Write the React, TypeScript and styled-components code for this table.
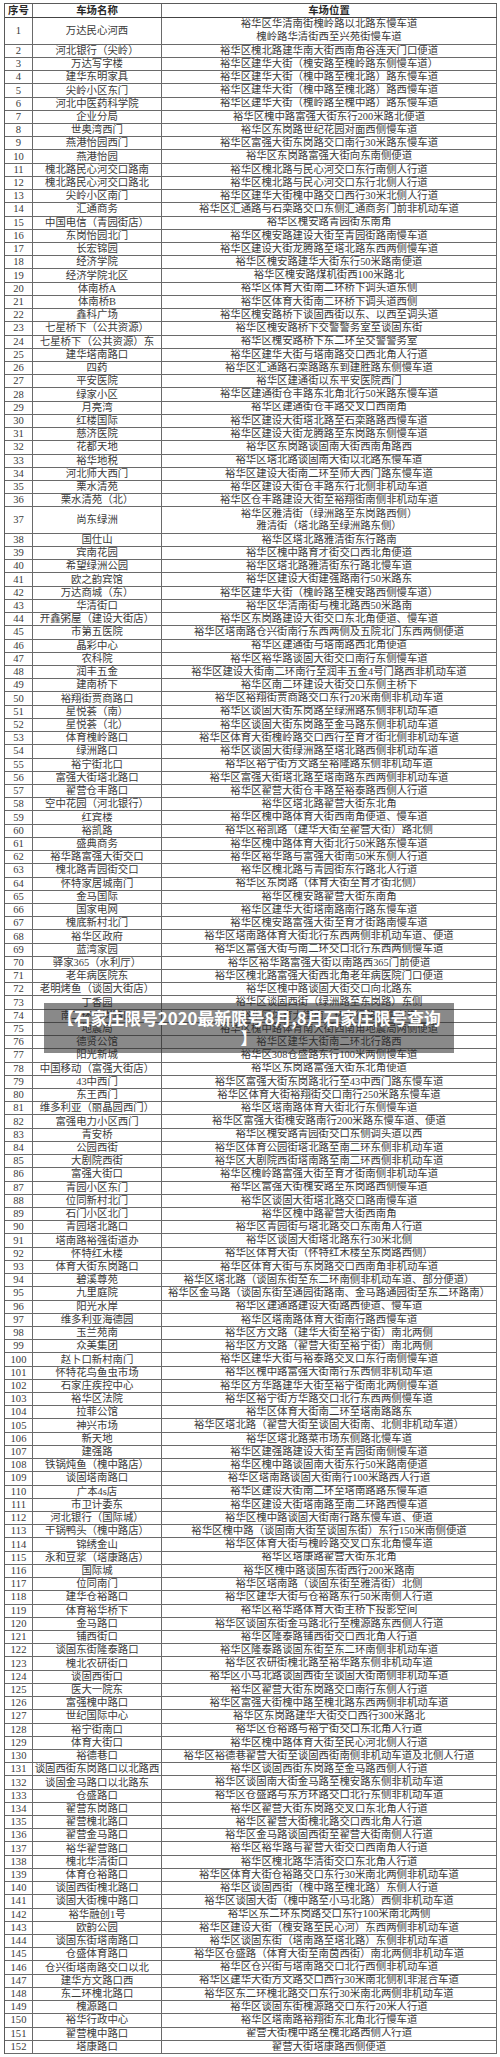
import React from "react";
import styled, { createGlobalStyle } from "styled-components";

const GlobalStyle = createGlobalStyle`
  html, body { margin: 0; padding: 0; background: #ffffff; }
  * { box-sizing: border-box; }
`;

type Row = [number, string, string[]];

const ROWS: Row[] = [
  [1, "万达民心河西", ["裕华区华清南街槐岭路以北路东慢车道", "槐岭路华清街西至兴苑街慢车道"]],
  [2, "河北银行（尖岭）", ["裕华区槐北路建华南大街西南角谷连天门口便道"]],
  [3, "万达写字楼", ["裕华区建华大街（槐安路至槐岭路东侧慢车道）"]],
  [4, "建华东明家具", ["裕华区建华大街（槐中路至槐北路）路东慢车道"]],
  [5, "尖岭小区东门", ["裕华区建华大街（槐中路至槐北路）路西慢车道"]],
  [6, "河北中医药科学院", ["裕华区建华大街（槐岭路至槐中路）路东慢车道"]],
  [7, "企业分局", ["裕华区槐中路富强大街东行200米路北便道"]],
  [8, "世奥湾西门", ["裕华区东岗路世纪花园对面西侧慢车道"]],
  [9, "燕港怡园西门", ["裕华区富强大街东岗路交口南行30米路东慢车道"]],
  [10, "燕港怡园", ["裕华区东岗路富强大街向东南侧便道"]],
  [11, "槐北路民心河交口路南", ["裕华区槐北路与民心河交口东行南侧人行道"]],
  [12, "槐北路民心河交口路北", ["裕华区槐北路与民心河交口东行北侧人行道"]],
  [13, "尖岭小区南门", ["裕华区建华大街槐中路交口西行30米北侧人行道"]],
  [14, "汇通商务", ["裕华区汇通路与石栾路交口东侧汇通商务门前非机动车道"]],
  [15, "中国电信（青园街店）", ["裕华区槐安路青园街东南角"]],
  [16, "东岗怡园北门", ["裕华区槐安路建设大街至青园街路南慢车道"]],
  [17, "长宏锦园", ["裕华区建设大街龙腾路至塔北路东西两侧慢车道"]],
  [18, "经济学院", ["裕华区槐安路建华大街东行50米路南便道"]],
  [19, "经济学院北区", ["裕华区槐安路煤机街西100米路北"]],
  [20, "体南桥A", ["裕华区体育大街南二环桥下调头道东侧"]],
  [21, "体南桥B", ["裕华区体育大街南二环桥下调头道西侧"]],
  [22, "鑫科广场", ["裕华区槐安路桥下谈固西街以东、以西至调头道"]],
  [23, "七星桥下（公共资源）", ["裕华区槐安路桥下交警警务室至谈固东街"]],
  [24, "七星桥下（公共资源）东", ["裕华区槐安路桥下东二环至交警警务室"]],
  [25, "建华塔南路口", ["裕华区建华大街与塔南路交口西北角人行道"]],
  [26, "四药", ["裕华区汇通路石栾路路东到建胜路东侧慢车道"]],
  [27, "平安医院", ["裕华区建通街以东平安医院西门"]],
  [28, "绿家小区", ["裕华区建通街仓丰路东北角北行50米路东慢车道"]],
  [29, "月亮湾", ["裕华区建通街仓丰路交叉口西南角"]],
  [30, "红楼国际", ["裕华区建设大街塔北路至石栾路路西慢车道"]],
  [31, "慈济医院", ["裕华区建设大街龙腾路至东岗路东侧慢车道"]],
  [32, "花都天地", ["裕华区东岗路谈固南大街西南角路西"]],
  [33, "裕华地税", ["裕华区塔北路谈固南大街以北路东慢车道"]],
  [34, "河北师大西门", ["裕华区建设大街南二环至师大西门路东慢车道"]],
  [35, "栗水清苑", ["裕华区建设大街仓丰路东行北侧非机动车道"]],
  [36, "栗水清苑（北）", ["裕华区仓丰路建设大街至裕翔街南侧非机动车道"]],
  [37, "尚东绿洲", ["裕华区雅清街（绿洲路至东岗路西侧）", "雅清街（塔北路至绿洲路东侧）"]],
  [38, "国仕山", ["裕华区塔北路雅清街东行路南"]],
  [39, "宾南花园", ["裕华区槐中路育才街交口西北角便道"]],
  [40, "希望绿洲公园", ["裕华区塔北路雅清街东行路北慢车道"]],
  [41, "欧之韵宾馆", ["裕华区建设大街建强路南行50米路东"]],
  [42, "万达商城（东）", ["裕华区建华大街（槐岭路至槐安路西侧慢车道）"]],
  [43, "华清街口", ["裕华区华清南街与槐北路西50米路南"]],
  [44, "开鑫粥屋（建设大街店）", ["裕华区东岗路建设大街交口东北角便道、慢车道"]],
  [45, "市第五医院", ["裕华区塔南路仓兴街南行东西两侧及五院北门东西两侧便道"]],
  [46, "晶彩中心", ["裕华区建通街与塔南路西北角便道"]],
  [47, "农科院", ["裕华区裕华路谈固大街交口南行东侧慢车道"]],
  [48, "润丰五金", ["裕华区建设大街南二环南行至润丰五金4号门路西非机动车道"]],
  [49, "建南桥下", ["裕华区南二环建设大街交口东侧主桥下"]],
  [50, "裕翔街贾商路口", ["裕华区裕翔街贾商路交口东行20米南侧非机动车道"]],
  [51, "星悦荟（南）", ["裕华区谈固大街东岗路至绿洲路东侧非机动车道"]],
  [52, "星悦荟（北）", ["裕华区谈固大街东岗路至金马路东侧非机动车道"]],
  [53, "体育槐岭路口", ["裕华区体育大街槐岭路交口西行至育才街北侧非机动车道"]],
  [54, "绿洲路口", ["裕华区谈固大街绿洲路至塔北路西侧非机动车道"]],
  [55, "裕宁街北口", ["裕华区裕宁街方文路至裕隆路东侧非机动车道"]],
  [56, "富强大街塔北路口", ["裕华区富强大街塔北路至塔南路东西两侧非机动车道"]],
  [57, "翟营仓丰路口", ["裕华区翟营大街仓丰路至裕泰路西侧人行道"]],
  [58, "空中花园（河北银行）", ["裕华区塔北路翟营大街东北角"]],
  [59, "红宾楼", ["裕华区槐中路体育大街西南角便道、慢车道"]],
  [60, "裕凯路", ["裕华区裕凯路（建华大街至翟营大街）路北侧"]],
  [61, "盛典商务", ["裕华区槐中路体育大街北行50米路东慢车道"]],
  [62, "裕华路富强大街交口", ["裕华区裕华路与富强大街南50米东侧人行道"]],
  [63, "槐北路青园街交口", ["裕华区槐北路与青园街东行路北人行道"]],
  [64, "怀特家居城南门", ["裕华区东岗路（体育大街至育才街北侧）"]],
  [65, "金马国际", ["裕华区槐安路翟营大街东南角"]],
  [66, "国家电网", ["裕华区建华大街塔南路南行路东慢车道"]],
  [67, "槐底新村北门", ["裕华区槐安路富强大街至育才街路南慢车道"]],
  [68, "裕华区政府", ["裕华区塔南路体育大街北行东西两侧非机动车道、便道"]],
  [69, "蓝湾家园", ["裕华区富强大街与南二环交口北行东西两侧慢车道"]],
  [70, "驿家365（水利厅）", ["裕华区裕华路富强大街以南路西365门前便道"]],
  [71, "老年病医院东", ["裕华区槐北路富强大街西北角老年病医院门口便道"]],
  [72, "老明烤鱼（谈固大街店）", ["裕华区槐中路谈固大街交口向北路东"]],
  [73, "丁香园", ["裕华区谈固西街（绿洲路至东岗路）东侧"]],
  [74, "南二环东岗路口", ["裕华区体育大街南二环北行路东慢车道"]],
  [75, "地震局", ["裕华区槐中路体育南大街西南角地震局两侧便道"]],
  [76, "德贤公馆", ["裕华区建华大街南二环北行路西"]],
  [77, "阳光新城", ["裕华区308仓盛路东行100米两侧慢车道"]],
  [78, "中国移动（富强大街店）", ["裕华区东岗路富强大街东北角便道"]],
  [79, "43中西门", ["裕华区富强大街东岗路北行至43中西门路东慢车道"]],
  [80, "东王西门", ["裕华区体育大街裕翔街交口南行250米路东慢车道"]],
  [81, "维多利亚（丽晶园西门）", ["裕华区塔南路体育大街北行东侧慢车道"]],
  [82, "富强电力小区西门", ["裕华区富强大街槐安路南行200米路东慢车道、便道"]],
  [83, "青安桥", ["裕华区槐安路青园街交口东侧调头道以西"]],
  [84, "公园西街", ["裕华区体育公园街塔北路至南二环东侧非机动车道"]],
  [85, "大剧院西街", ["裕华区大剧院西街塔南路至南二环西侧非机动车道"]],
  [86, "富强大街口", ["裕华区槐岭路富强大街至育才街南侧非机动车道"]],
  [87, "青园小区东门", ["裕华区富强大街槐安路至东岗路西侧慢车道"]],
  [88, "位同新村北门", ["裕华区谈固大街塔北路交口路南慢车道"]],
  [89, "石门小区北门", ["裕华区槐中路翟营大街西南角"]],
  [90, "青园塔北路口", ["裕华区青园街与塔北路交口东南角人行道"]],
  [91, "塔南路裕强街道办", ["裕华区谈固大街塔北路东行30米北侧"]],
  [92, "怀特红木楼", ["裕华区体育大街（怀特红木楼至东岗路西侧）"]],
  [93, "体育大街东岗路口", ["裕华区体育大街与东岗路交口西南角非机动车道"]],
  [94, "碧溪尊苑", ["裕华区塔北路（谈固东街至东二环南侧非机动车道、部分便道）"]],
  [95, "九里庭院", ["裕华区金马路（谈固东街至通园街路南、金马路通园街至东二环路南）"]],
  [96, "阳光水岸", ["裕华区建通路建设大街路西便道、慢车道"]],
  [97, "维多利亚海德园", ["裕华区塔南路体育大街南行路西慢车道"]],
  [98, "玉兰苑南", ["裕华区方文路（建华大街至裕宁街）南北两侧"]],
  [99, "众美集团", ["裕华区方文路（翟营大街至裕宁街）南北两侧"]],
  [100, "赵卜口新村南门", ["裕华区建华大街与裕泰路交叉口东行南侧慢车道"]],
  [101, "怀特花鸟鱼虫市场", ["裕华区槐中路富强大街南行东西侧非机动车道"]],
  [102, "石家庄疾控中心", ["裕华区方华路建华大街至裕宁街南北两侧慢车道"]],
  [103, "裕华区法院", ["裕华区裕宁街方华路交口北行东西两侧慢车道"]],
  [104, "拉菲公馆", ["裕华区体育大街南二环至塔南路路东"]],
  [105, "神兴市场", ["裕华区塔北路（翟营大街至谈固大街南、北侧非机动车道）"]],
  [106, "新天地", ["裕华区塔北路菜市场东侧路北慢车道"]],
  [107, "建强路", ["裕华区建强路建设大街至青园街南侧慢车道"]],
  [108, "铁锅炖鱼（槐中路店）", ["裕华区槐中路谈固南大街东行50米路南便道"]],
  [109, "谈固塔南路口", ["裕华区塔南路谈固大街南行100米路西人行道"]],
  [110, "广本4s店", ["裕华区建设大街南二环至塔南路路东慢车道"]],
  [111, "市卫计委东", ["裕华区建设大街塔南路至南二环路西慢车道"]],
  [112, "河北银行（国际城）", ["裕华区槐中路谈固大街南行路东慢车道、便道"]],
  [113, "干锅鸭头（槐中路店）", ["裕华区槐中路（谈固南大街至谈固东街）东行150米南侧便道"]],
  [114, "锦绣金山", ["裕华区体育大街与槐岭路交叉口东北角慢车道"]],
  [115, "永和豆浆（塔康路店）", ["裕华区塔康路翟营大街东北角"]],
  [116, "国际城", ["裕华区槐中路谈固东街西行200米路南"]],
  [117, "位同南门", ["裕华区塔南路（谈固东街至雅清街）北侧"]],
  [118, "建华仓裕路口", ["裕华区建华大街与仓裕路东行50米南侧人行道"]],
  [119, "体育裕华桥下", ["裕华区裕华路体育大街主桥下投影空间"]],
  [120, "金马路口", ["裕华区谈固东街金马路北行至槐源路东西侧人行道"]],
  [121, "铺西街口", ["裕华区隆泰路铺西街交口西北角人行道"]],
  [122, "谈固东街隆泰路口", ["裕华区隆泰路谈固东街至东二环南侧非机动车道"]],
  [123, "槐北农研街口", ["裕华区农研街槐北路至裕华路东侧非机动车道"]],
  [124, "谈固西街口", ["裕华区小马北路谈固西街至谈固大街南侧非机动车道"]],
  [125, "医大一院东", ["裕华区翟营大街东岗路交口南行东侧人行道"]],
  [126, "富强槐中路口", ["裕华区富强大街槐中路至槐北路东西两侧非机动车道"]],
  [127, "世纪国际中心", ["裕华区东岗路建华大街交口西行300米路北"]],
  [128, "裕宁街南口", ["裕华区仓裕路与裕宁街交口东北角人行道"]],
  [129, "体育大街口", ["裕华区槐中路体育大街至民心河北侧人行道"]],
  [130, "裕德巷口", ["裕华区裕德巷翟营大街至谈固西街南侧非机动车道及北侧人行道"]],
  [131, "谈固西街东岗路口以北路西", ["裕华区谈固西街东岗路至金马路西侧人行道"]],
  [132, "谈固金马路口以北路东", ["裕华区谈固南大街金马路至槐安路东侧非机动车道"]],
  [133, "仓盛路口", ["裕华区仓盛路与东方环路交口北行东侧非机动车道"]],
  [134, "翟营东岗路口", ["裕华区翟营大街东岗路交叉口东北角人行道"]],
  [135, "翟营槐北路口", ["裕华区翟营大街槐北路交口西北角人行道"]],
  [136, "翟营金马路口", ["裕华区金马路谈固西街至翟营大街南侧人行道"]],
  [137, "裕华翟营路口", ["裕华区裕华路与翟营大街交口西南角人行道"]],
  [138, "槐北华清街口", ["裕华区槐北路华清街交口东北角人行道"]],
  [139, "体育仓裕路口", ["裕华区体育大街仓裕路交口东行30米南北两侧非机动车道"]],
  [140, "谈固西街槐北路口", ["裕华区谈固西街（槐中路至槐北路）东侧人行道"]],
  [141, "谈固大街槐中路口", ["裕华区谈固大街（槐中路至小马北路）西侧非机动车道"]],
  [142, "裕华融创1号", ["裕华区东二环东岗路交口东行100米南北两侧"]],
  [143, "欧韵公园", ["裕华区建设大街（槐安路至民心河）东西两侧非机动车道"]],
  [144, "谈固东街塔南路口", ["裕华区谈固东街（塔南路至塔北路）东侧非机动车道"]],
  [145, "仓盛体育路口", ["裕华区仓盛路（体育大街至南茵西街）南北两侧非机动车道"]],
  [146, "仓兴街塔南路交口以北", ["裕华区仓兴街与塔南路交口北行西侧非机动车道"]],
  [147, "建华方文路口西", ["裕华区建华大街方文路交口西行30米南北侧机非混合车道"]],
  [148, "东二环槐北路口", ["裕华区东二环槐北路交口东行30米南北两侧非机动车道"]],
  [149, "槐源路口", ["裕华区谈固东街槐源路交口东行20米人行道"]],
  [150, "裕华行政中心", ["裕华区塔南路裕翔街东北角北行慢车道"]],
  [151, "翟营槐中路口", ["翟营大街槐中路至槐北路西侧人行道"]],
  [152, "塔康路口", ["翟营大街塔康路西侧便道"]],
];

const UNIT = 13.22;

const Page = styled.div`
  position: relative;
  padding: 3px 3px 0 4px;
  width: 500px;
  font-family: "Liberation Serif", "Noto Sans CJK SC", serif;
  color: #3a3a3a;
`;

const Table = styled.div`
  width: 493px;
  border-top: 1px solid #5a5a5a;
  border-left: 1px solid #5a5a5a;
`;

const RowBox = styled.div<{ $h: number }>`
  display: grid;
  grid-template-columns: 28px 129px 1fr;
  height: ${(p) => p.$h}px;
  border-bottom: 1px solid #6a6a6a;
`;

const HeadRow = styled(RowBox)`
  border-bottom: 1px solid #444;
`;

const Cell = styled.div`
  display: flex;
  flex-direction: column;
  align-items: center;
  justify-content: center;
  border-right: 1px solid #6a6a6a;
  font-size: 10.4px;
  line-height: 12px;
  white-space: nowrap;
  overflow: hidden;
`;

const Line = styled.span`
  display: block;
  line-height: 12.6px;
`;

const HeadCell = styled(Cell)`
  font-weight: 700;
  color: #2a2a2a;
`;

const NumCell = styled(Cell)`
  font-size: 10.6px;
`;

const Banner = styled.div`
  position: absolute;
  top: 1003px;
  left: 44px;
  width: 410px;
  height: 50px;
  background: rgba(40, 40, 40, 0.55);
  color: #ffffff;
  font-family: "Noto Sans CJK SC", "Liberation Sans", sans-serif;
  font-weight: 700;
  font-size: 16.8px;
  line-height: 20px;
  text-align: center;
  padding: 5px 2px 0;
  white-space: nowrap;
`;

export default function App() {
  return (
    <>
      <GlobalStyle />
      <Page>
        <Table>
          <HeadRow $h={14.3}>
            <HeadCell>序号</HeadCell>
            <HeadCell>车场名称</HeadCell>
            <HeadCell>车场位置</HeadCell>
          </HeadRow>
          {ROWS.map(([n, name, pos]) => (
            <RowBox key={n} $h={UNIT * pos.length}>
              <NumCell>{n}</NumCell>
              <Cell>{name}</Cell>
              <Cell>
                {pos.map((line, i) => (
                  <Line key={i}>{line}</Line>
                ))}
              </Cell>
            </RowBox>
          ))}
        </Table>
        <Banner>
          【石家庄限号2020最新限号8月,8月石家庄限号查询
          <br />】
        </Banner>
      </Page>
    </>
  );
}
